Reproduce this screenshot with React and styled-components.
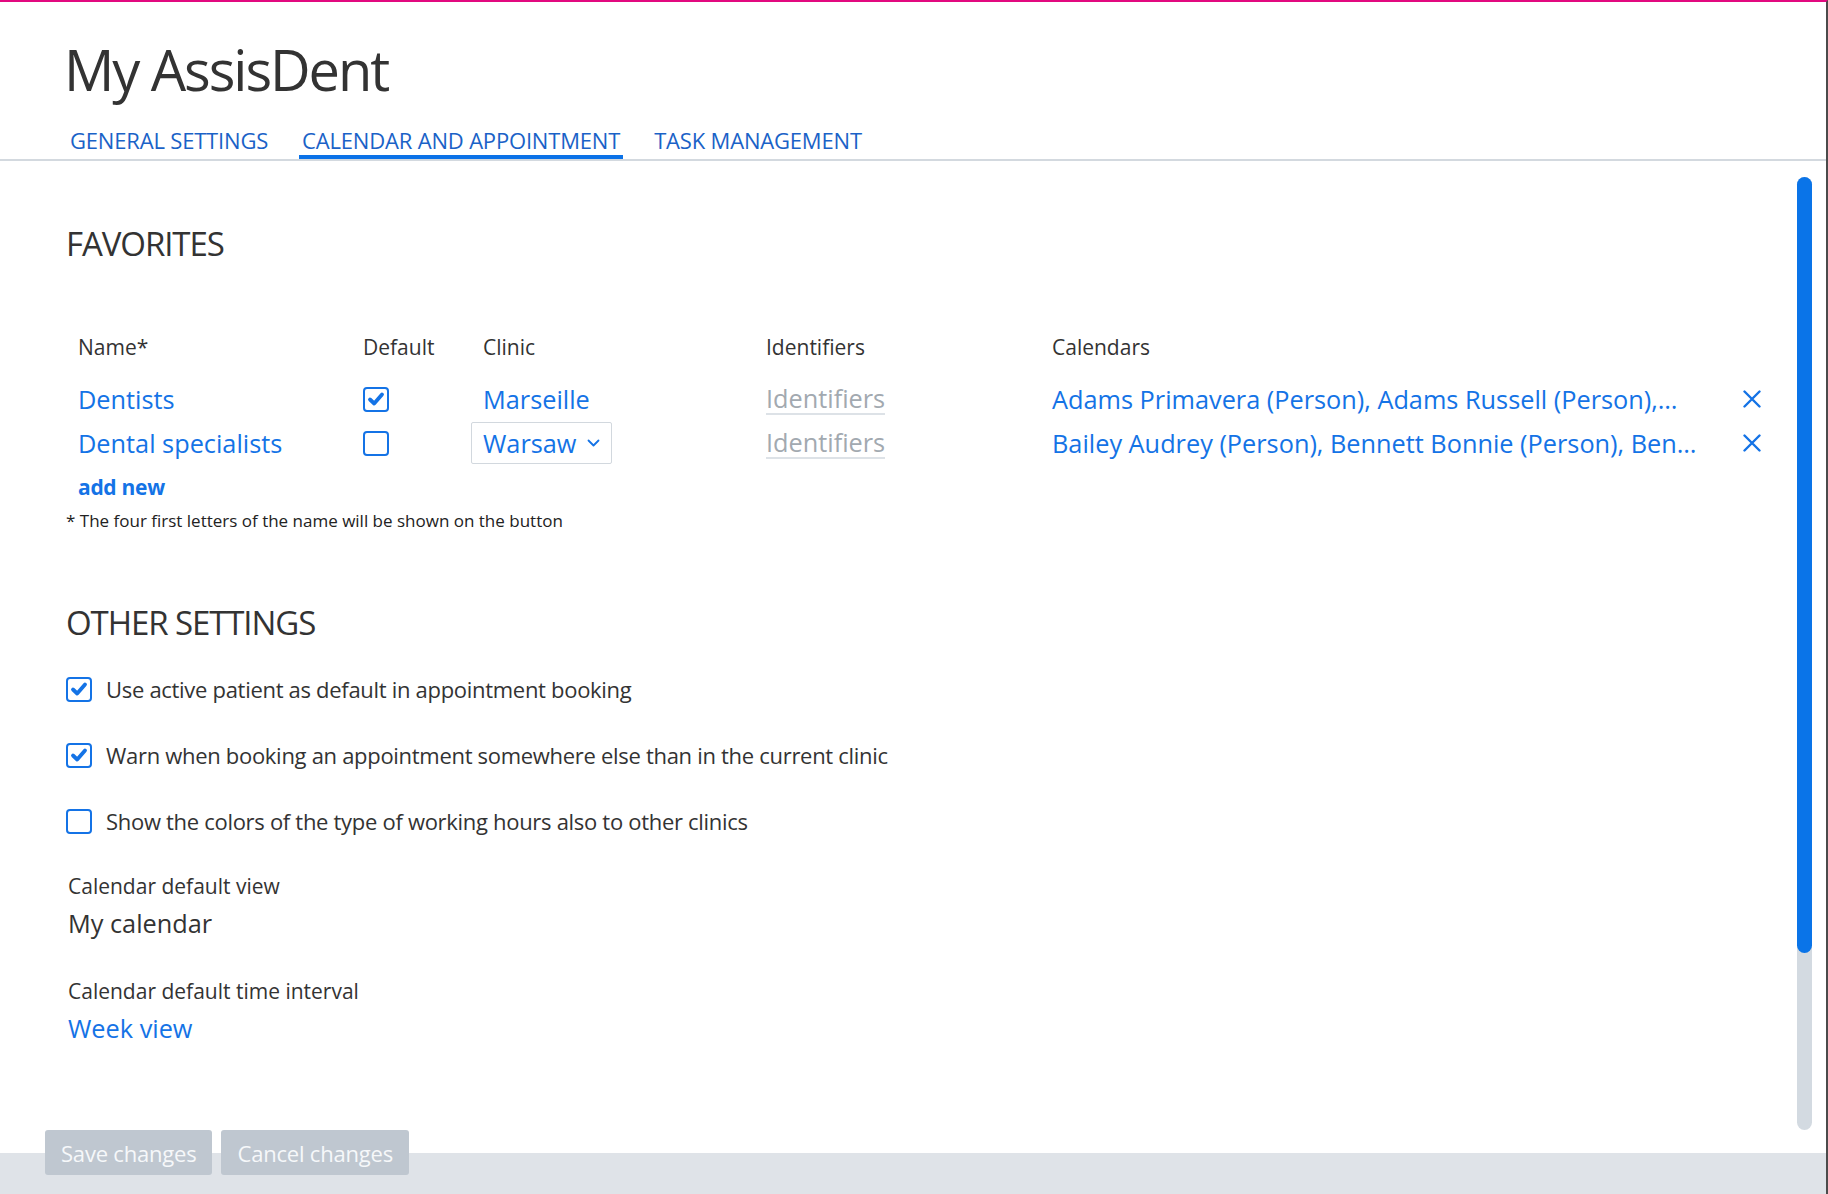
import styled, { createGlobalStyle } from "styled-components";

const GlobalStyle = createGlobalStyle`
	html, body {
		margin: 0;
		padding: 0;
		background: #ffffff;
	}
	body {
		font-family: "Segoe UI", "Open Sans", sans-serif;
		color: #333333;
	}
	* {
		box-sizing: border-box;
	}
`;

const favorites = [
	{
		name: "Dentists",
		checked: true,
		clinic: "Marseille",
		select: false,
		calendars: "Adams Primavera (Person), Adams Russell (Person),…",
	},
	{
		name: "Dental specialists",
		checked: false,
		clinic: "Warsaw",
		select: true,
		calendars: "Bailey Audrey (Person), Bennett Bonnie (Person), Ben…",
	},
];

const otherSettings = [
	{ label: "Use active patient as default in appointment booking", checked: true },
	{ label: "Warn when booking an appointment somewhere else than in the current clinic", checked: true },
	{ label: "Show the colors of the type of working hours also to other clinics", checked: false },
];

function CheckBox({ checked }) {
	return (
		<Box>
			{checked && (
				<svg width="20" height="20" viewBox="0 0 20 20">
					<polyline points="4,10.5 8.2,14.5 16,5.5" fill="none" stroke="#1473e6" strokeWidth="3.8" strokeLinecap="round" strokeLinejoin="round" />
				</svg>
			)}
		</Box>
	);
}

function RemoveIcon() {
	return (
		<svg width="18" height="18" viewBox="0 0 18 18">
			<path d="M1.5 1.5 L16.5 16.5 M16.5 1.5 L1.5 16.5" stroke="#1473e6" strokeWidth="2.4" strokeLinecap="round" />
		</svg>
	);
}

function Chevron() {
	return (
		<svg width="13" height="8" viewBox="0 0 13 8">
			<polyline points="1.5,1.5 6.5,6.5 11.5,1.5" fill="none" stroke="#1473e6" strokeWidth="1.8" strokeLinecap="round" strokeLinejoin="round" />
		</svg>
	);
}

export default function App() {
	return (
		<Page>
			<GlobalStyle />
			<Header>
				<Title>My AssisDent</Title>
				<TabBar>
					<Tab>GENERAL SETTINGS</Tab>
					<Tab active>CALENDAR AND APPOINTMENT</Tab>
					<Tab>TASK MANAGEMENT</Tab>
				</TabBar>
			</Header>

			<Body>
				<Content>
					<SectionTitle>FAVORITES</SectionTitle>

					<Table>
						<HeadCell>Name*</HeadCell>
						<HeadCell>Default</HeadCell>
						<HeadCell indent>Clinic</HeadCell>
						<HeadCell>Identifiers</HeadCell>
						<HeadCell>Calendars</HeadCell>
						<HeadCell />

						{favorites.map((f) => (
							<Row key={f.name}>
								<Cell>
									<LinkText>{f.name}</LinkText>
								</Cell>
								<Cell>
									<CheckBox checked={f.checked} />
								</Cell>
								<Cell>
									<ClinicValue bordered={f.select}>
										{f.clinic}
										{f.select && <Chevron />}
									</ClinicValue>
								</Cell>
								<Cell>
									<Placeholder>Identifiers</Placeholder>
								</Cell>
								<Cell>
									<CalendarText>{f.calendars}</CalendarText>
								</Cell>
								<Cell center>
									<RemoveIcon />
								</Cell>
							</Row>
						))}
					</Table>

					<AddNew>add new</AddNew>
					<Footnote>* The four first letters of the name will be shown on the button</Footnote>

					<SectionTitle second>OTHER SETTINGS</SectionTitle>

					<OptionList>
						{otherSettings.map((o) => (
							<Option key={o.label}>
								<CheckBox checked={o.checked} />
								<span>{o.label}</span>
							</Option>
						))}
					</OptionList>

					<Field>
						<FieldLabel>Calendar default view</FieldLabel>
						<FieldValue>My calendar</FieldValue>
					</Field>
					<Field>
						<FieldLabel>Calendar default time interval</FieldLabel>
						<FieldValue link>Week view</FieldValue>
					</Field>
				</Content>

				<ScrollTrack>
					<ScrollThumb />
				</ScrollTrack>
			</Body>

			<Footer>
				<FooterButton>Save changes</FooterButton>
				<FooterButton>Cancel changes</FooterButton>
			</Footer>
		</Page>
	);
}

const Page = styled.div`
	width: 100vw;
	height: 100vh;
	display: flex;
	flex-direction: column;
	border-top: 2px solid #e2097f;
	border-right: 2px solid #4b4b4b;
	overflow: hidden;
`;

const Header = styled.div`
	padding-top: 38px;
`;

const Title = styled.h1`
	margin: 0 0 27px 64px;
	font-size: 56px;
	line-height: 58px;
	font-weight: 400;
	letter-spacing: -0.037em;
	color: #333333;
`;

const TabBar = styled.div`
	display: flex;
	gap: 28px;
	padding-left: 67px;
	border-bottom: 2px solid #d3d9df;
`;

const Tab = styled.div`
	padding: 0 3px;
	font-size: 22px;
	line-height: 30px;
	letter-spacing: -0.18px;
	color: #1a62c7;
	border-bottom: 4px solid ${(p) => (p.active ? "#0b72e7" : "transparent")};
`;

const Body = styled.div`
	flex: 1;
	display: flex;
	min-height: 0;
`;

const Content = styled.div`
	flex: 1;
	padding: 63px 25px 0 66px;
`;

const SectionTitle = styled.h2`
	margin: ${(p) => (p.second ? "70px" : "0")} 0 0 0;
	font-size: 33px;
	line-height: 40px;
	font-weight: 400;
	letter-spacing: -0.033em;
	color: #333333;
`;

const Table = styled.div`
	display: grid;
	grid-template-columns: 285px 108px 295px 286px minmax(0, 1fr) 40px;
	padding-left: 12px;
	margin-top: 68px;
`;

const HeadCell = styled.div`
	font-size: 21px;
	line-height: 30px;
	color: #333333;
	padding-left: ${(p) => (p.indent ? "12px" : "0")};
	margin-bottom: 15px;
`;

const Row = styled.div`
	display: contents;
`;

const Cell = styled.div`
	height: 44px;
	display: flex;
	align-items: center;
	justify-content: ${(p) => (p.center ? "center" : "flex-start")};
	min-width: 0;
`;

const LinkText = styled.span`
	font-size: 25.3px;
	color: #1473e6;
	white-space: nowrap;
`;

const Box = styled.span`
	width: 26px;
	height: 25px;
	flex-shrink: 0;
	border: 2px solid #1473e6;
	border-radius: 4px;
	background: #ffffff;
	display: flex;
	align-items: center;
	justify-content: center;
`;

const ClinicValue = styled.div`
	display: flex;
	align-items: center;
	gap: 11px;
	height: 42px;
	padding: 0 ${(p) => (p.bordered ? "11px" : "12px")};
	border: ${(p) => (p.bordered ? "1px solid #d2d8de" : "none")};
	border-radius: 2px;
	font-size: 25.3px;
	color: #1473e6;
`;

const Placeholder = styled.span`
	font-size: 25.3px;
	line-height: 30px;
	color: #a2a9b0;
	border-bottom: 2px solid #dde2e7;
`;

const CalendarText = styled.span`
	font-size: 25.3px;
	color: #1473e6;
	white-space: nowrap;
	overflow: hidden;
	text-overflow: ellipsis;
`;

const AddNew = styled.div`
	margin: 7px 0 0 12px;
	font-size: 21px;
	line-height: 30px;
	font-weight: 700;
	letter-spacing: -0.3px;
	color: #1473e6;
`;

const Footnote = styled.div`
	margin-top: 7px;
	font-size: 17px;
	line-height: 24px;
	color: #222222;
`;

const OptionList = styled.div`
	display: flex;
	flex-direction: column;
	gap: 30px;
	margin-top: 28px;
`;

const Option = styled.label`
	display: flex;
	align-items: center;
	gap: 14px;
	height: 36px;
	font-size: 22px;
	letter-spacing: -0.3px;
	color: #333333;
`;

const Field = styled.div`
	margin: 32px 0 0 2px;
	& + & {
		margin-top: 35px;
	}
`;

const FieldLabel = styled.div`
	font-size: 21px;
	line-height: 30px;
	color: #333333;
`;

const FieldValue = styled.div`
	margin-top: 4px;
	font-size: 25.3px;
	line-height: 36px;
	color: ${(p) => (p.link ? "#1473e6" : "#333333")};
`;

const ScrollTrack = styled.div`
	width: 15px;
	margin: 16px 14px 0 0;
	border-radius: 8px;
	background: #d3dae1;
	display: flex;
	flex-direction: column;
`;

const ScrollThumb = styled.div`
	height: 81.4%;
	border-radius: 8px;
	background: #0a74e8;
`;

const Footer = styled.div`
	height: 64px;
	flex-shrink: 0;
	display: flex;
	align-items: flex-start;
	gap: 9px;
	padding-left: 45px;
	background: linear-gradient(to bottom, transparent 23px, #dfe3e8 23px);
`;

const FooterButton = styled.button`
	height: 45px;
	padding: 0 16px;
	border: none;
	border-radius: 3px;
	background: #bfc7d0;
	color: #f6f8fa;
	font-family: "Segoe UI", "Open Sans", sans-serif;
	font-size: 22px;
	letter-spacing: -0.2px;
`;
